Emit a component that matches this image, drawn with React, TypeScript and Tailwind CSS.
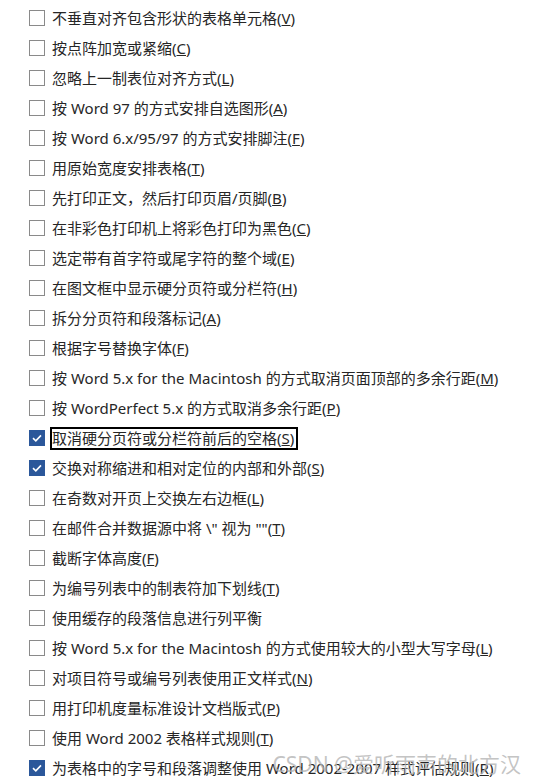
import React from "react";

type Item = { label: string; key?: string; checked?: boolean; focused?: boolean };

const items: Item[] = [
  { label: "不垂直对齐包含形状的表格单元格", key: "V" },
  { label: "按点阵加宽或紧缩", key: "C" },
  { label: "忽略上一制表位对齐方式", key: "L" },
  { label: "按 Word 97 的方式安排自选图形", key: "A" },
  { label: "按 Word 6.x/95/97 的方式安排脚注", key: "F" },
  { label: "用原始宽度安排表格", key: "T" },
  { label: "先打印正文，然后打印页眉/页脚", key: "B" },
  { label: "在非彩色打印机上将彩色打印为黑色", key: "C" },
  { label: "选定带有首字符或尾字符的整个域", key: "E" },
  { label: "在图文框中显示硬分页符或分栏符", key: "H" },
  { label: "拆分分页符和段落标记", key: "A" },
  { label: "根据字号替换字体", key: "F" },
  { label: "按 Word 5.x for the Macintosh 的方式取消页面顶部的多余行距", key: "M" },
  { label: "按 WordPerfect 5.x 的方式取消多余行距", key: "P" },
  { label: "取消硬分页符或分栏符前后的空格", key: "S", checked: true, focused: true },
  { label: "交换对称缩进和相对定位的内部和外部", key: "S", checked: true },
  { label: "在奇数对开页上交换左右边框", key: "L" },
  { label: "在邮件合并数据源中将 \\\" 视为 \"\"", key: "T" },
  { label: "截断字体高度", key: "F" },
  { label: "为编号列表中的制表符加下划线", key: "T" },
  { label: "使用缓存的段落信息进行列平衡" },
  { label: "按 Word 5.x for the Macintosh 的方式使用较大的小型大写字母", key: "L" },
  { label: "对项目符号或编号列表使用正文样式", key: "N" },
  { label: "用打印机度量标准设计文档版式", key: "P" },
  { label: "使用 Word 2002 表格样式规则", key: "T" },
  { label: "为表格中的字号和段落调整使用 Word 2002-2007 样式评估规则", key: "R", checked: true },
];

function Box({ checked }: { checked?: boolean }) {
  if (checked) {
    return (
      <span className="flex h-4 w-4 shrink-0 items-center justify-center bg-[#2b579a]">
        <svg viewBox="0 0 16 16" className="h-4 w-4" fill="none">
          <path d="M4 8.2 L6.8 10.8 L12 5.4" stroke="#fff" strokeWidth="1.6" />
        </svg>
      </span>
    );
  }
  return <span className="h-4 w-4 shrink-0 border border-[#8a8a8a] bg-white" />;
}

export default function App() {
  return (
    <div
      className="relative h-[779px] w-[539px] overflow-hidden bg-white pt-[3px] text-[15px] text-[#262626]"
      style={{ fontFamily: '"Noto Sans", "Noto Sans CJK SC", sans-serif' }}
    >
      {items.map((it, i) => (
        <div key={i} className="flex h-[30px] items-center whitespace-nowrap pl-[29px]">
          <Box checked={it.checked} />
          <span
            className={
              it.focused
                ? "ml-[5px] flex h-[23px] items-center border-2 border-black pl-0 pr-[2px] leading-none"
                : "ml-[7px] leading-none"
            }
          >
            {it.label}
            {it.key && (
              <>
                (<span className="underline underline-offset-1">{it.key}</span>)
              </>
            )}
          </span>
        </div>
      ))}
      <div className="absolute bottom-[4px] right-[18px] text-[21px] leading-none text-[#b4b4b4]/80">
        CSDN @爱听雨声的北方汉
      </div>
    </div>
  );
}
